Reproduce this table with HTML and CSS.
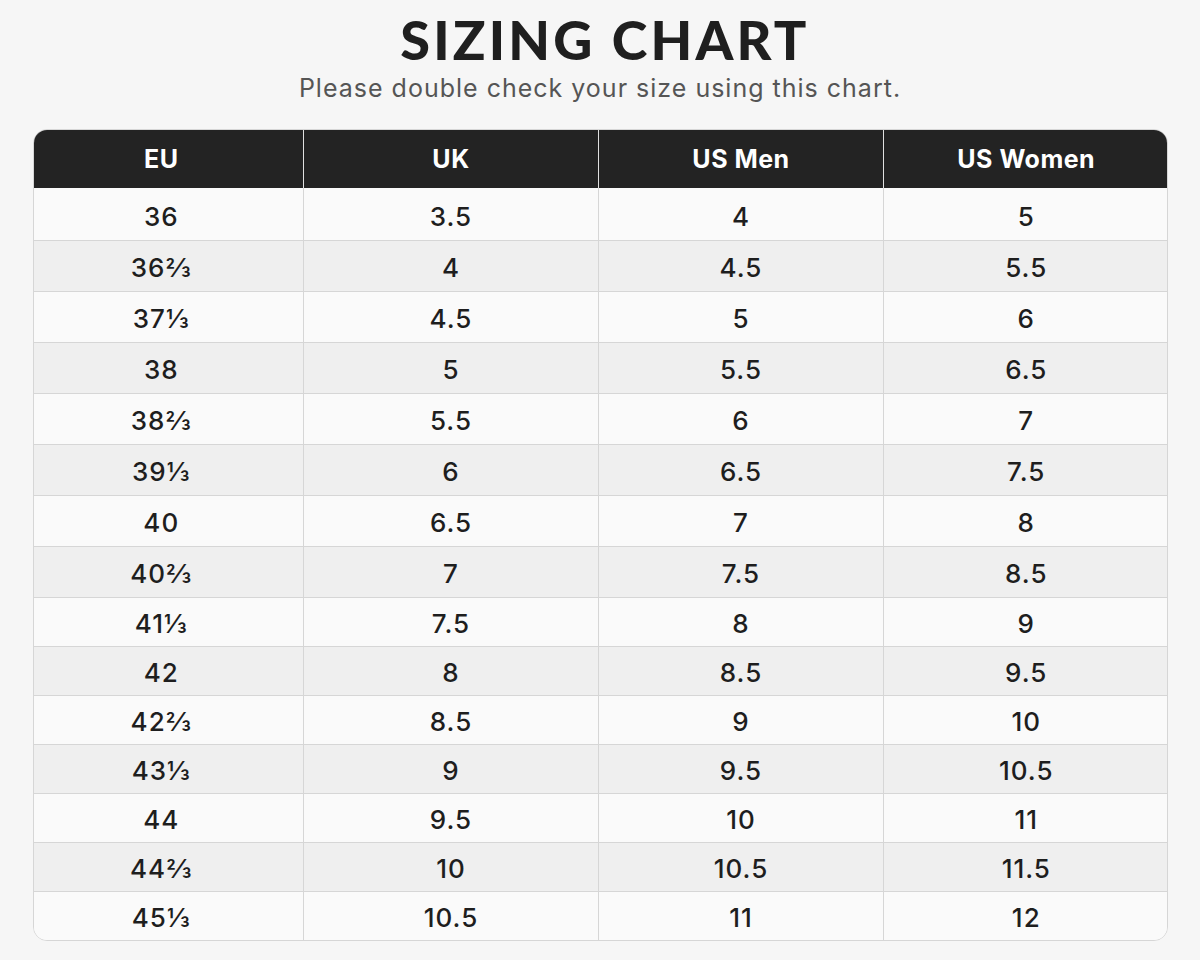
FILE: index.html
```html
<!DOCTYPE html>
<html>
<head>
<meta charset="utf-8">
<link rel="stylesheet" href="styles.css">
</head>
<body>
<div class="page">
  <h1 class="title">SIZING CHART</h1>
  <p class="subtitle">Please double check your size using this chart.</p>
  <div class="chart">
    <table class="table">
      <colgroup>
        <col class="c1"><col class="c2"><col class="c3"><col class="c4">
      </colgroup>
      <thead>
        <tr><th>EU</th><th>UK</th><th>US Men</th><th>US Women</th></tr>
      </thead>
      <tbody>
        <tr><td>36</td><td>3.5</td><td>4</td><td>5</td></tr>
        <tr><td>36⅔</td><td>4</td><td>4.5</td><td>5.5</td></tr>
        <tr><td>37⅓</td><td>4.5</td><td>5</td><td>6</td></tr>
        <tr><td>38</td><td>5</td><td>5.5</td><td>6.5</td></tr>
        <tr><td>38⅔</td><td>5.5</td><td>6</td><td>7</td></tr>
        <tr><td>39⅓</td><td>6</td><td>6.5</td><td>7.5</td></tr>
        <tr><td>40</td><td>6.5</td><td>7</td><td>8</td></tr>
        <tr><td>40⅔</td><td>7</td><td>7.5</td><td>8.5</td></tr>
        <tr><td>41⅓</td><td>7.5</td><td>8</td><td>9</td></tr>
        <tr><td>42</td><td>8</td><td>8.5</td><td>9.5</td></tr>
        <tr><td>42⅔</td><td>8.5</td><td>9</td><td>10</td></tr>
        <tr><td>43⅓</td><td>9</td><td>9.5</td><td>10.5</td></tr>
        <tr><td>44</td><td>9.5</td><td>10</td><td>11</td></tr>
        <tr><td>44⅔</td><td>10</td><td>10.5</td><td>11.5</td></tr>
        <tr><td>45⅓</td><td>10.5</td><td>11</td><td>12</td></tr>
      </tbody>
    </table>
  </div>
</div>
</body>
</html>
```
FILE: styles.css
```css
html, body {
  margin: 0;
  padding: 0;
  background: #f6f6f6;
}
body {
  font-family: Inter, "Noto Sans", "DejaVu Sans", sans-serif;
  color: #1e1e1e;
}
.page {
  width: 1200px;
  height: 960px;
  display: flex;
  flex-direction: column;
  align-items: center;
}
.title {
  margin: 11px 0 0 10px;
  font-family: Lato, "Noto Sans", sans-serif;
  font-weight: 900;
  font-size: 54px;
  line-height: 58px;
  letter-spacing: 3.2px;
  color: #1f1f1f;
}
.subtitle {
  margin: 3px 0 0;
  font-size: 25px;
  line-height: 32px;
  color: #555;
  letter-spacing: 1px;
}
.chart {
  margin-top: 25px;
  width: 1135px;
  border: 1px solid #d6d6d6;
  border-radius: 14px;
  overflow: hidden;
  box-sizing: border-box;
}
.table {
  width: 100%;
  border-collapse: collapse;
  table-layout: fixed;
}
.c1 { width: 270px; }
.c2 { width: 295px; }
.c3 { width: 285px; }
.c4 { width: 285px; }
.table th {
  background: #232323;
  color: #fff;
  font-weight: 700;
  font-size: 25px;
  letter-spacing: 0.5px;
  height: 58px;
  padding: 0;
  border-left: 1px solid #e0e0e0;
}
.table td {
  height: 49px;
  padding: 3px 0 0;
  text-align: center;
  font-size: 26px;
  letter-spacing: 1px;
  font-weight: 500;
  color: #1e1e1e;
  border-top: 1px solid #d6d6d6;
  border-left: 1px solid #d6d6d6;
  box-sizing: border-box;
}
.table tbody tr:nth-child(-n+8) td {
  height: 51px;
}
.table tbody tr:first-child td {
  height: 52px;
  padding-top: 6px;
}
.table th:first-child, .table td:first-child {
  border-left: none;
  padding-right: 14px;
}
.table tbody tr:first-child td {
  border-top: none;
}
.table tbody tr {
  background: #fafafa;
}
.table tbody tr:nth-child(even) {
  background: #efefef;
}
```
